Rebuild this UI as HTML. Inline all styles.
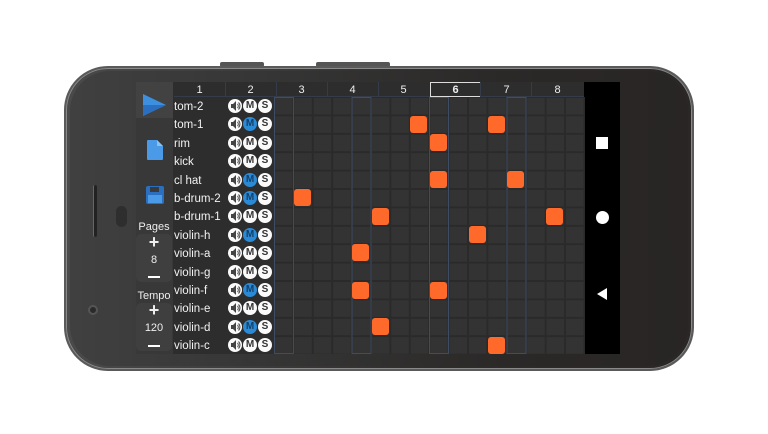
<!DOCTYPE html>
<html><head><meta charset="utf-8"><style>
*{margin:0;padding:0;box-sizing:border-box}
body{width:768px;height:434px;background:#fff;position:relative;overflow:hidden;font-family:"Liberation Sans",sans-serif}
.a{position:absolute}
.phone{left:64px;top:66px;width:630px;height:305px;border-radius:44px;background:linear-gradient(90deg,#4a4a4a,#2e2c2b 60%,#2a2726);border:2px solid #5a5a5a;box-shadow:0 0 0 1px #8a8a8a inset}
.inner{left:70px;top:71px;width:618px;height:295px;border-radius:40px;background:linear-gradient(90deg,#404040,#363636 30%,#2b2928 70%,#282524)}
.lbl{color:#f2f2f2;font-size:11.5px}
.c{width:14px;height:14px;border-radius:50%;background:#fafafa;color:#333;font-size:10px;font-weight:bold;text-align:center;line-height:14px}
.m{background:#2b8ad6;color:#163f66}
.hd{color:#eee;font-size:11px;text-align:center;width:51px;top:83px;line-height:14px}
.side{color:#eee;font-size:11px;text-align:center;width:36px}
.note{width:17px;height:17px;border-radius:3px;background:#ff6a2a}
</style></head><body>
<div class="a" style="left:220px;top:62px;width:44px;height:5px;background:#555;border-radius:2px"></div>
<div class="a" style="left:316px;top:62px;width:74px;height:5px;background:#555;border-radius:2px"></div>
<div class="a phone"></div>
<div class="a inner"></div>
<div class="a" style="left:93px;top:185px;width:4px;height:52px;background:#222;border-left:1px solid #666;border-radius:2px"></div>
<div class="a" style="left:116px;top:206px;width:11px;height:21px;background:#2e2e2e;border-radius:6px"></div>
<div class="a" style="left:88px;top:305px;width:10px;height:10px;border-radius:50%;border:2px solid #555;background:#2a2a2a"></div>
<!-- screen -->
<div class="a" style="left:136px;top:82px;width:449px;height:272px;background:#2d2d2d"></div>
<div class="a" style="left:136px;top:82px;width:37px;height:272px;background:#383838"></div>
<div class="a" style="left:136px;top:82px;width:37px;height:36px;background:#424242"></div>
<div class="a" style="left:584px;top:82px;width:36px;height:272px;background:#000"></div>
<div class="a" style="left:596px;top:137px;width:12px;height:12px;background:#fff"></div>
<div class="a" style="left:596px;top:211px;width:13px;height:13px;background:#fff;border-radius:50%"></div>
<svg class="a" style="left:596px;top:287px" width="12" height="14"><polygon points="11,1 11,13 1,7" fill="#fff"/></svg>
<!-- header -->
<div class="a" style="left:174px;top:82px;width:410px;height:15px;background:#2d2d2d;border-bottom:1px solid #333c48"></div>
<div class="a hd" style="left:174px">1</div><div class="a hd" style="left:225px">2</div><div class="a hd" style="left:276px">3</div><div class="a hd" style="left:327px">4</div><div class="a hd" style="left:378px">5</div>
<div class="a hd" style="left:430px;width:51px;border:1px solid #ddd;font-weight:bold;top:82px;height:15px">6</div>
<div class="a hd" style="left:481px">7</div><div class="a hd" style="left:532px">8</div>
<svg class="a" style="left:174px;top:82px" width="410" height="15"><g stroke="#333c48" stroke-width="1"><line x1="51.5" y1="0" x2="51.5" y2="15"/><line x1="102.5" y1="0" x2="102.5" y2="15"/><line x1="153.5" y1="0" x2="153.5" y2="15"/><line x1="204.5" y1="0" x2="204.5" y2="15"/><line x1="306.5" y1="0" x2="306.5" y2="15"/><line x1="357.5" y1="0" x2="357.5" y2="15"/></g></svg>
<!-- grid -->
<svg class="a" style="left:274px;top:97px" width="311" height="257">
<defs><pattern id="p" width="19.4" height="18.4" patternUnits="userSpaceOnUse"><rect width="19.4" height="18.4" fill="#2a2a2a"/><rect x="1" y="1" width="17.4" height="16.4" fill="#333"/></pattern></defs>
<rect width="311" height="257" fill="url(#p)"/>
<g fill="none" stroke="#3d4d66" stroke-width="1"><rect x="0.5" y="0.5" width="19" height="256"/><rect x="78" y="0.5" width="19" height="256"/><rect x="155.5" y="0.5" width="19" height="256"/><rect x="233" y="0.5" width="19" height="256"/></g>
</svg>
<!-- notes -->
<div class="a note" style="left:410px;top:116px"></div><div class="a note" style="left:488px;top:116px"></div>
<div class="a note" style="left:430px;top:134px"></div>
<div class="a note" style="left:430px;top:171px"></div><div class="a note" style="left:507px;top:171px"></div>
<div class="a note" style="left:294px;top:189px"></div>
<div class="a note" style="left:372px;top:208px"></div><div class="a note" style="left:546px;top:208px"></div>
<div class="a note" style="left:469px;top:226px"></div>
<div class="a note" style="left:352px;top:244px"></div>
<div class="a note" style="left:352px;top:282px"></div><div class="a note" style="left:430px;top:282px"></div>
<div class="a note" style="left:372px;top:318px"></div>
<div class="a note" style="left:488px;top:337px"></div>
<!-- track labels -->
<div class="a lbl" style="left:174px;top:98px;line-height:18.4px">tom-2<br>tom-1<br>rim<br>kick<br>cl hat<br>b-drum-2<br>b-drum-1<br>violin-h<br>violin-a<br>violin-g<br>violin-f<br>violin-e<br>violin-d<br>violin-c</div>
<div class="a" id="btns" style="left:228px;top:99px"></div>
<!-- side panel -->
<svg class="a" style="left:141px;top:92px" width="26" height="26"><polygon points="2,2 25,13 2,24" fill="#3d8fe0"/><polygon points="2,13 25,13 2,24" fill="#2a6fc0"/></svg>
<svg class="a" style="left:146px;top:139px" width="18" height="22"><path d="M2 1h9l6 6v13a1 1 0 0 1-1 1H2a1 1 0 0 1-1-1V2a1 1 0 0 1 1-1z" fill="#4a9ae8"/><path d="M11 1v6h6z" fill="#8cc0f0"/></svg>
<svg class="a" style="left:145px;top:185px" width="20" height="20"><rect x="1" y="1" width="18" height="18" rx="2" fill="#2a6fc0"/><rect x="5" y="2" width="9" height="5" fill="#3a3a3a"/><rect x="3" y="10" width="14" height="8" fill="#4a9ae8"/></svg>
<div class="a side" style="left:136px;top:221px">Pages</div>
<div class="a side" style="left:136px;top:234px;height:48px;background:#3f3f3f;border-radius:5px"></div>
<div class="a side" style="left:136px;top:232px;font-size:18px;font-weight:bold">+</div>
<div class="a side" style="left:136px;top:254px">8</div>
<div class="a" style="left:148px;top:276px;width:12px;height:2px;background:#fff"></div>
<div class="a side" style="left:136px;top:290px">Tempo</div>
<div class="a side" style="left:136px;top:303px;height:48px;background:#3f3f3f;border-radius:5px"></div>
<div class="a side" style="left:136px;top:300px;font-size:18px;font-weight:bold">+</div>
<div class="a side" style="left:136px;top:322px">120</div>
<div class="a" style="left:148px;top:345px;width:12px;height:2px;background:#fff"></div>
<script>
var mm=[0,1,0,0,1,1,0,1,0,0,1,0,1,0],h='';
for(var i=0;i<14;i++){var y=i*18.4;
h+='<div class="a c" style="left:0;top:'+y+'px"><svg width="14" height="14"><path d="M3 5h2l3-3v10l-3-3H3z" fill="#444"/><path d="M9.5 5a3 3 0 0 1 0 4M10.5 3.5a5 5 0 0 1 0 7" stroke="#444" fill="none" stroke-width="1"/></svg></div>';
h+='<div class="a c'+(mm[i]?' m':'')+'" style="left:15px;top:'+y+'px">M</div>';
h+='<div class="a c" style="left:30px;top:'+y+'px">S</div>';}
document.getElementById('btns').innerHTML=h;
</script>
</body></html>
